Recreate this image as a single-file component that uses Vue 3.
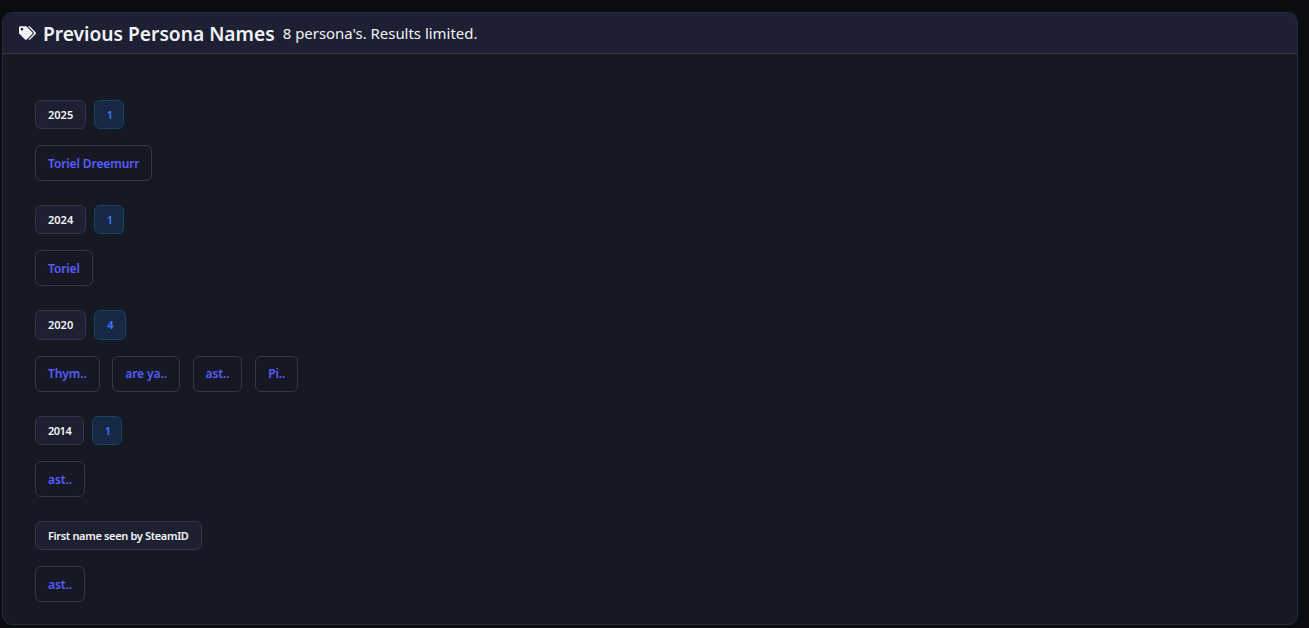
<script setup>
const groups = [
  { label: '2025', count: 1, names: ['Toriel Dreemurr'] },
  { label: '2024', count: 1, names: ['Toriel'] },
  { label: '2020', count: 4, names: ['Thym..', 'are ya..', 'ast..', 'Pi..'] },
  { label: '2014', count: 1, labelClass: 'tight-year', names: ['ast..'] },
  { label: 'First name seen by SteamID', labelClass: 'tight-text', names: ['ast..'] }
]
</script>

<template>
  <div class="page">
    <section class="card">
      <header class="head">
        <svg class="icon" viewBox="0 0 640 512" aria-hidden="true">
          <path fill="currentColor" d="M497.9 225.9L286.1 14.1A48 48 0 0 0 252.1 0H48C21.5 0 0 21.5 0 48v204.1a48 48 0 0 0 14.1 33.9l211.9 211.9c18.7 18.7 49.1 18.7 67.9 0l204.1-204.1c18.7-18.7 18.7-49.1-.1-67.9zM112 160c-26.5 0-48-21.5-48-48s21.5-48 48-48 48 21.5 48 48-21.5 48-48 48zm513.9 133.8L421.8 497.9c-18.7 18.7-49.1 18.7-67.9 0l-.4-.4L527.6 323.5c17-17 26.4-39.6 26.4-63.6s-9.4-46.6-26.4-63.6L331.4 0h48.7a48 48 0 0 1 33.9 14.1l211.9 211.9c18.7 18.7 18.7 49.1 0 67.8z"/>
        </svg>
        <h2 class="title">Previous Persona Names</h2>
        <span class="sub">8 persona's. Results limited.</span>
      </header>
      <div class="body">
        <div v-for="g in groups" :key="g.label" class="group">
          <div class="badges">
            <span class="badge" :class="g.labelClass">{{ g.label }}</span>
            <span v-if="g.count" class="badge count" :class="{ one: g.count === 1 }">{{ g.count }}</span>
          </div>
          <div class="names">
            <a v-for="n in g.names" :key="n" class="chip">{{ n }}</a>
          </div>
        </div>
      </div>
    </section>
  </div>
</template>

<style>
html, body { margin: 0; background: #0b0c10; }
</style>

<style scoped>
.page {
  height: 628px;
  box-sizing: border-box;
  padding: 12px 11px 3px 2px;
  background: #0b0c10;
  font-family: "Noto Sans", "Open Sans", sans-serif;
  overflow: hidden;
}
.card {
  height: 100%;
  box-sizing: border-box;
  background: #161923;
  border: 1px solid #252b3a;
  border-radius: 10px;
  overflow: hidden;
}
.head {
  display: flex;
  align-items: center;
  height: 41px;
  box-sizing: border-box;
  padding: 0 0 0 15px;
  background: #1c2032;
  border-bottom: 1px solid #333848;
  color: #f1f3f8;
}
.icon { width: 17px; height: 14px; margin: 0 7px 0 1px; flex: none; }
.title {
  margin: 2px 8px 0 0;
  font-size: 19.2px;
  font-weight: 600;
  line-height: 1;
}
.sub { font-size: 14.95px; }
.body { padding: 45.9px 32px 0; }
.group { margin-bottom: 24px; }
.badges { display: flex; gap: 8px; margin-bottom: 16px; }
.badge {
  height: 29.25px;
  box-sizing: border-box;
  display: flex;
  align-items: center;
  padding: 0 12px 0.5px;
  background: #1c2030;
  border: 1px solid #2f3544;
  border-radius: 6px;
  color: #f4f5f8;
  font-size: 11px;
  font-weight: 600;
}
.tight-year { letter-spacing: -0.5px; }
.tight-text { letter-spacing: -0.35px; }
.count {
  background: #182744;
  border-color: #15455f;
  color: #3a7bff;
  font-weight: 600;
}
.one { letter-spacing: -1.8px; padding-right: 11.8px; padding-left: 11.6px; }
.names { display: flex; gap: 12.7px; }
.chip {
  height: 36px;
  box-sizing: border-box;
  display: flex;
  align-items: center;
  padding: 0.4px 12px 0;
  background: #161923;
  border: 1px solid #333846;
  border-radius: 6px;
  color: #5a5cff;
  font-size: 12px;
  font-weight: 600;
  letter-spacing: -0.1px;
}
</style>
